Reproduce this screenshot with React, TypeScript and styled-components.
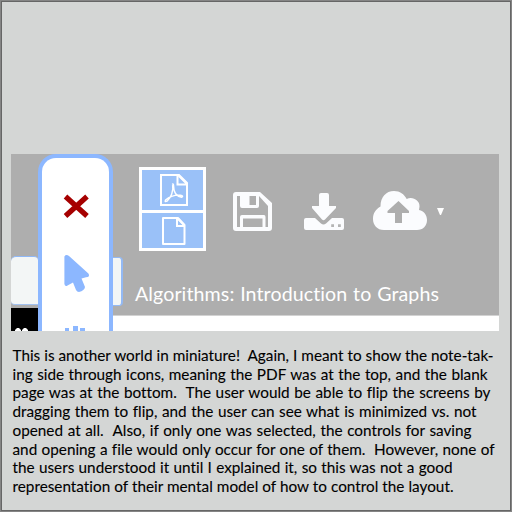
import React from 'react';
import styled, { createGlobalStyle } from 'styled-components';

const Global = createGlobalStyle`
  * { box-sizing: border-box; }
  body { margin: 0; background: #d4d6d5; }
  svg { display: block; flex: none; }
`;

const Card = styled.main`
  width: 512px;
  height: 512px;
  padding: 153px 11px 0 10px;
  overflow: hidden;
  background: #d4d6d5;
  border: 1px solid #858585;
  box-shadow: inset 0 0 0 1px #666;
`;

const Preview = styled.section`
  display: grid;
  grid-template-columns: 27px 75px 386px;
  width: 488px;
  height: 177px;
  overflow: hidden;
  background: #aeaeae;
`;

const Edge = styled.div`
  display: flex;
  flex-direction: column;
  justify-content: flex-end;
`;

const EdgeTab = styled.div`
  height: 49px;
  margin-bottom: 3px;
  background: #f3f6f6;
  border-top: 1px solid #8fb8f8;
  border-bottom: 1px solid #a3c2f0;
  border-radius: 5px 4px 0 4px;
`;

const EdgeFooter = styled.div`
  display: flex;
  align-items: flex-end;
  height: 23px;
  background: #000;
`;

const ToolPill = styled.nav`
  display: flex;
  flex-direction: column;
  align-items: center;
  height: 177px;
  overflow: hidden;
  background: #fff;
  border: 4px solid #8cb7ff;
  border-bottom: 0;
  border-radius: 18px 18px 0 0;
`;

const Main = styled.div`
  display: flex;
  flex-direction: column;
`;

const Actions = styled.div`
  display: flex;
  align-items: flex-start;
  height: 103px;
  padding: 13px 0 0 26px;
`;

const PageSwitch = styled.div`
  display: grid;
  grid-template-rows: 40px 35px;
  gap: 3px;
  width: 67px;
  height: 84px;
  padding: 3px;
  background: #fff;
`;

const PageOption = styled.div<{ $top: number; $left: number }>`
  padding: ${p => p.$top}px 0 0 ${p => p.$left}px;
  background: #9ac1f8;
`;

const Action = styled.div<{ $gap: number; $top: number }>`
  margin: ${p => p.$top}px 0 0 ${p => p.$gap}px;
`;

const TitleRow = styled.div`
  display: flex;
  height: 58px;
`;

const Tab = styled.div`
  width: 10px;
  height: 49px;
  background: #f3f6f6;
  border: 1px solid #93b9f4;
  border-right-width: 2px;
  border-left: 0;
  border-radius: 0 4px 4px 0;
`;

const Title = styled.h1`
  margin: 24px 0 0 12px;
  width: 304px;
  color: #fff;
  font: 400 19.6px/26px Lato, sans-serif;
  font-variant-ligatures: none;
  letter-spacing: 0.1px;
  white-space: nowrap;
  text-align-last: justify;
`;

const Strip = styled.div`
  height: 16px;
  background: #fff;
  border-top: 1px solid #d2d2d2;
`;

const Caption = styled.p`
  margin: 15px 0 0 1.5px;
  color: #000;
  font: 400 15.3px/18.7px Lato, sans-serif;
  -webkit-text-stroke: 0.1px #000;
  font-variant-ligatures: none;
`;

const Line = styled.span<{ $width: number }>`
  display: block;
  width: ${p => p.$width}px;
  white-space: pre;
  text-align-last: justify;
`;

const lines: [string, number][] = [
  ['This is another world in miniature!  Again, I meant to show the note-tak-', 481],
  ['ing side through icons, meaning the PDF was at the top, and the blank', 475],
  ['page was at the bottom.  The user would be able to flip the screens by', 478],
  ['dragging them to flip, and the user can see what is minimized vs. not', 464],
  ['opened at all.  Also, if only one was selected, the controls for saving', 459],
  ['and opening a file would only occur for one of them.  However, none of', 482],
  ['the users understood it until I explained it, so this was not a good', 440],
  ['representation of their mental model of how to control the layout.', 441],
];

const ToolIcons = () => (
  <svg width="67" height="173" viewBox="42 158 67 173">
    <path d="M65.5 196.5 87 216M87 196.5 65.5 216" stroke="#a60000" strokeWidth="5.3" fill="none" />
    <path d="M64.4 256.5Q66 254 69 256L88.4 273.5Q90.5 277 86 277.3L81.5 278.5 85 287Q84.5 290.5 79 292Q77 292 76 290L73 282.5 67.5 285.5Q65 287 64.4 284Z" fill="#8cb7ff" />
    <path d="M65 328h4v3h-4zM73 326h5v5h-5zM80 328h5v3h-5z" fill="#8cb7ff" />
  </svg>
);

const PdfIcon = () => (
  <svg width="28" height="32" viewBox="0 0 28 32" fill="none" stroke="#fff">
    <path d="M1 1H19L27 9V31H1Z" strokeWidth="2" />
    <path d="M17.5 1V10.5H27M19 2l7.5 7.5" strokeWidth="2" />
    <path d="M12.2 10.5Q13.7 9 13.6 12C13.6 19 17 22.5 21.7 23.2Q24 22 20.5 21.2C14 20.8 9 23 5.5 26Q4.2 28.5 7 27.2C11 23.5 13.8 17 12.6 11" strokeWidth="1.4" />
  </svg>
);

const BlankIcon = () => (
  <svg width="24" height="28" viewBox="0 0 24 28" fill="none" stroke="#fff" strokeWidth="2">
    <path d="M1 1H16L22.5 8V27H1Z" strokeLinejoin="round" />
    <path d="M15 1V9H22.5M16 2l6 6" />
  </svg>
);

const SaveIcon = () => (
  <svg width="39" height="39" viewBox="0 0 39 39">
    <path d="M3 0H27L39 11V36Q39 39 36 39H3Q0 39 0 36V3Q0 0 3 0ZM4 4V35H7V25Q7 23 9 23H31Q32.5 23 32.5 25V35H35V14L26 4V14Q26 16 24 16H9Q7 16 7 14V4ZM16.5 4V13H23V4ZM10 26.5V35H29.5V26.5Z" fill="#fbfcfe" fillRule="evenodd" />
  </svg>
);

const DownloadIcon = () => (
  <svg width="40" height="38" viewBox="0 0 40 38">
    <path d="M2 25H11L17 30.5Q19.5 32.5 22 30.5L28 25H38Q40 25 40 27V35Q40 37 38 37H2Q0 37 0 35V27Q0 25 2 25Z" fill="#fbfcfe" />
    <path d="M17 0H23Q25 0 25 2V13H32V15L21 26.5Q19.5 28 18 26.5L8 15V13H15V2Q15 0 17 0Z" fill="#fbfcfe" />
    <path d="M27.2 31.3h2.8v2.8h-2.8zM34 31.3h2.8v2.8H34z" fill="#b4b4b4" />
  </svg>
);

const UploadIcon = () => (
  <svg width="54" height="40" viewBox="0 0 54 40">
    <path d="M11 39C4 39 0 34 0 28C0 22 3 18 7.5 15.5C7.5 6 13 0 21 0C27 0 31 3 33.7 8C39 5 47 9 46.5 15.5L46 19C51 20 54 24 54 29C54 35 50 39 44 39ZM25.5 10 14.5 20V22H22V32H29V22H36V20Z" fill="#fbfcfe" fillRule="evenodd" />
  </svg>
);

export default function App() {
  return (
    <>
      <Global />
      <Card>
        <Preview>
          <Edge>
            <EdgeTab />
            <EdgeFooter>
              <svg width="27" height="3" viewBox="0 0 27 3">
                <path d="M4 3V2L6 0H8L10 2V3ZM11 3V2L13 0H15L17 2V3Z" fill="#fff" />
              </svg>
            </EdgeFooter>
          </Edge>
          <ToolPill><ToolIcons /></ToolPill>
          <Main>
            <Actions>
              <PageSwitch>
                <PageOption $top={4} $left={18}><PdfIcon /></PageOption>
                <PageOption $top={4} $left={20}><BlankIcon /></PageOption>
              </PageSwitch>
              <Action $gap={27} $top={25}><SaveIcon /></Action>
              <Action $gap={32} $top={26}><DownloadIcon /></Action>
              <Action $gap={29} $top={24}><UploadIcon /></Action>
              <Action $gap={10} $top={41}>
                <svg width="7" height="7"><path d="M0 0H7L4 7H3Z" fill="#fff" /></svg>
              </Action>
            </Actions>
            <TitleRow>
              <Tab />
              <Title>Algorithms: Introduction to Graphs</Title>
            </TitleRow>
            <Strip />
          </Main>
        </Preview>
        <Caption>
          {lines.map(([text, width]) => <Line key={text} $width={width}>{text}</Line>)}
        </Caption>
      </Card>
    </>
  );
}
